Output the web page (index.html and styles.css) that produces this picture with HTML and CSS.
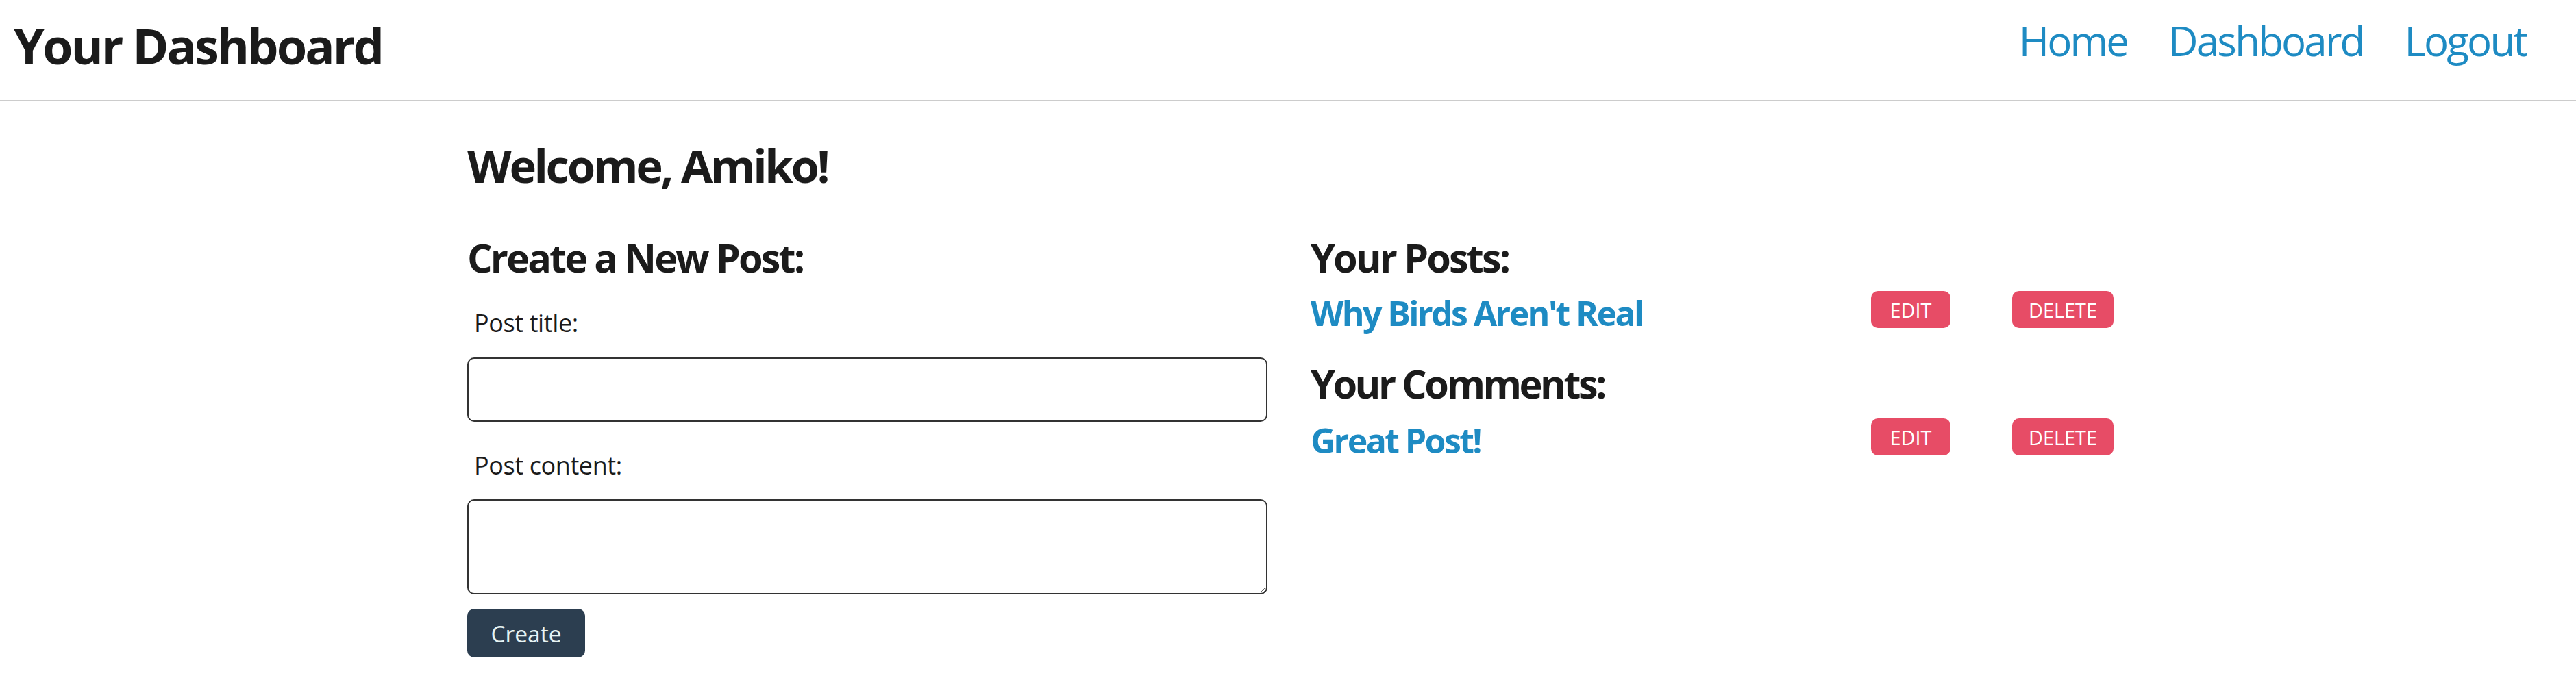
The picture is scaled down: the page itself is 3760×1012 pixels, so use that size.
FILE: index.html
```html
<!DOCTYPE html>
<html lang="en">
<head>
<meta charset="utf-8">
<title>Your Dashboard</title>
<link rel="stylesheet" href="styles.css">
</head>
<body>
<header class="topbar">
  <h1 class="brand">Your Dashboard</h1>
  <nav class="nav">
    <a href="#" class="nav-link">Home</a>
    <a href="#" class="nav-link">Dashboard</a>
    <a href="#" class="nav-link">Logout</a>
  </nav>
</header>
<main class="main">
  <h2 class="welcome">Welcome, Amiko!</h2>
  <div class="columns">
    <section class="col-left">
      <h3 class="section-title">Create a New Post:</h3>
      <label class="field-label" for="title">Post title:</label>
      <input class="field-input" id="title" type="text">
      <label class="field-label label-content" for="content">Post content:</label>
      <textarea class="field-textarea" id="content"></textarea>
      <button class="btn-create" type="button">Create</button>
    </section>
    <section class="col-right">
      <h3 class="section-title">Your Posts:</h3>
      <div class="item-row">
        <a href="#" class="item-title">Why Birds Aren't Real</a>
        <button class="btn-small btn-edit" type="button">EDIT</button>
        <button class="btn-small btn-delete" type="button">DELETE</button>
      </div>
      <h3 class="section-title comments-title">Your Comments:</h3>
      <div class="item-row row-comment">
        <a href="#" class="item-title">Great Post!</a>
        <button class="btn-small btn-edit" type="button">EDIT</button>
        <button class="btn-small btn-delete" type="button">DELETE</button>
      </div>
    </section>
  </div>
</main>
</body>
</html>
```
FILE: styles.css
```css
* { box-sizing: border-box; }
html, body { margin: 0; padding: 0; background: #ffffff; }
body {
  font-family: "Open Sans", "Noto Sans", sans-serif;
  color: #1b1b1b;
}

.topbar {
  display: flex;
  justify-content: space-between;
  align-items: flex-start;
  height: 148px;
  padding: 0 73px 0 20px;
  border-bottom: 2px solid #cccccc;
}
.brand {
  margin: 30px 0 0 0;
  font-size: 72px;
  line-height: 72px;
  font-weight: 700;
  letter-spacing: -3px;
}
.nav {
  display: flex;
  gap: 60px;
  margin-top: 29px;
}
.nav-link {
  font-size: 60px;
  line-height: 60px;
  color: #1e8bc3;
  text-decoration: none;
  letter-spacing: -2.8px;
}

.main {
  padding-left: 682px;
}
.welcome {
  margin: 60px 0 0 0;
  font-size: 67px;
  line-height: 67px;
  font-weight: 700;
  letter-spacing: -3.4px;
}
.columns {
  display: flex;
  gap: 63px;
  margin-top: 72px;
}
.col-left {
  width: 1168px;
  display: flex;
  flex-direction: column;
  align-items: flex-start;
}
.col-right {
  display: flex;
  flex-direction: column;
}
.section-title {
  margin: 0;
  font-size: 57.6px;
  line-height: 58px;
  font-weight: 700;
  letter-spacing: -2.9px;
}
.comments-title { letter-spacing: -3.5px; }
.field-label {
  margin: 49px 0 0 10px;
  font-size: 36px;
  line-height: 36px;
  letter-spacing: -0.4px;
}
.label-content { margin-top: 46px; }
.field-input {
  margin-top: 32px;
  width: 1168px;
  height: 94px;
  border: 2px solid #333333;
  border-radius: 10px;
  font: inherit;
}
.field-textarea {
  margin-top: 31px;
  width: 1168px;
  height: 139px;
  border: 2px solid #333333;
  border-radius: 10px;
  font: inherit;
}
.btn-create {
  margin-top: 21px;
  width: 172px;
  height: 71px;
  border: none;
  border-radius: 10px;
  background: #2c3e50;
  color: #e6f3f3;
  font-family: inherit;
  font-size: 33.6px;
  padding: 0;
}

.item-row {
  display: flex;
  align-items: flex-start;
  margin-top: 20px;
}
.row-comment { margin-top: 22px; }
.comments-title { margin-top: 49px; }
.item-title {
  width: 818px;
  margin-top: 7px;
  font-size: 50px;
  line-height: 50px;
  font-weight: 700;
  color: #1e8bc3;
  text-decoration: none;
  letter-spacing: -2.6px;
}
.btn-small {
  height: 54px;
  border: none;
  border-radius: 10px;
  background: #e74c66;
  color: #ffffff;
  font-family: inherit;
  font-size: 28.8px;
  padding: 0;
}
.btn-edit { width: 116px; }
.btn-delete { width: 148px; margin-left: 90px; }
```
